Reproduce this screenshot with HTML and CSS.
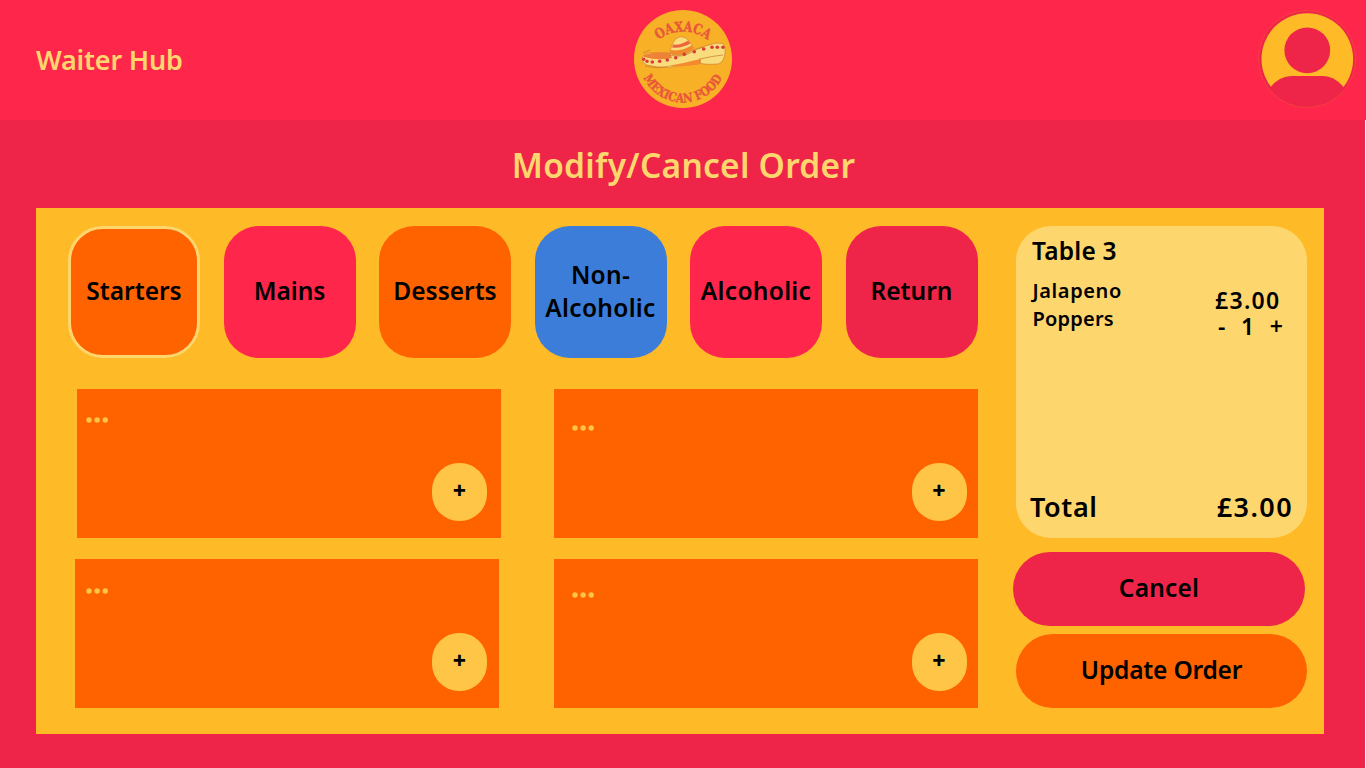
FILE: index.html
```html
<!DOCTYPE html>
<html lang="en">
<head>
<meta charset="utf-8">
<title>Waiter Hub</title>
<link rel="stylesheet" href="styles.css">
</head>
<body>
<header class="topbar">
  <div class="hub-name"><span>Waiter Hub</span></div>
  <svg class="logo" width="100" height="100" viewBox="0 0 100 100">
    <defs>
      <path id="arc-top" d="M15.4 42.5A40 40 0 0 1 84.6 42.5"/>
      <path id="arc-bottom" d="M6.5 50A43.5 43.5 0 0 0 93.5 50"/>
    </defs>
    <circle cx="50" cy="50" r="49" fill="#f8b026"/>
    <text class="logo-text logo-top"><textPath href="#arc-top" startOffset="50%" text-anchor="middle" textLength="53" lengthAdjust="spacingAndGlyphs">OAXACA</textPath></text>
    <text class="logo-text logo-bottom"><textPath href="#arc-bottom" startOffset="50%" text-anchor="middle" textLength="98" lengthAdjust="spacingAndGlyphs">MEXICAN FOOD</textPath></text>
    <path d="M9 50Q10 45 16 44L36 44Q46 50 60 41L76 36Q84 33 90 34.5Q93 38 92 44Q91 53 85 55Q73 56 66 54Q50 57 38 58Q24 59 14 56Q9 54 9 50Z" fill="#f9dc7b" stroke="#c8792b" stroke-width=".6"/>
    <path d="M11 46Q23 42 37 44L39 49Q25 52 11 48Z" fill="#ee8236"/>
    <path d="M35 57Q52 54 67 50Q69 54 66 55.5Q51 58 35 57Z" fill="#f58a30"/>
    <path d="M37 44C38 36 41 30 46 28C52 27 57 31 60.5 39Q49 49 37 44Z" fill="#f9dc7b" stroke="#c8792b" stroke-width=".6"/>
    <path d="M40 35.5Q48 36.5 55 31.5L57.5 34.5Q49 39.5 39 38.5Z" fill="#ee633b"/>
    <path d="M37.5 41Q49 43 59 36L60.5 39.5Q49 48 37 44.5Z" fill="#f28a2c"/>
    <path d="M36 46Q50 50 62 41L70 38M67 49V54M67 50Q79 47 90 46M10 44L17 41M12 57Q26 60 35 57.5" fill="none" stroke="#c8792b" stroke-width=".7"/>
    <g fill="#d93b3a"><circle cx="10.7" cy="50.3" r="1.7"/><circle cx="14" cy="52.3" r="1.7"/><circle cx="19.3" cy="53" r="1.8"/><circle cx="26.7" cy="52.3" r="1.8"/><circle cx="34.3" cy="51" r="1.8"/><circle cx="42.7" cy="48.7" r="1.8"/><circle cx="51.3" cy="45.3" r="1.8"/><circle cx="61.3" cy="42.7" r="1.8"/><circle cx="70.7" cy="40" r="1.8"/><circle cx="79" cy="38.3" r="1.8"/><circle cx="84.3" cy="38.3" r="1.8"/><circle cx="90" cy="38.3" r="1.8"/></g>
  </svg>
  <svg class="avatar" width="98" height="98" viewBox="0 0 98 98">
    <defs><clipPath id="disc"><circle cx="49" cy="49" r="48.5"/></clipPath></defs>
    <circle cx="49" cy="49" r="48.5" fill="#ee2548"/>
    <circle cx="49.3" cy="49" r="45.8" fill="#ffba28"/>
    <circle cx="49.3" cy="40.3" r="22.9" fill="#ee2548"/>
    <path clip-path="url(#disc)" d="M9 82Q19 66 34 66H64Q79 66 89 82V98H9Z" fill="#ee2548"/>
    <circle cx="49" cy="49" r="48.5" fill="none" stroke="#f65a38" stroke-width=".5"/>
  </svg>
</header>
<div class="page">
<h1 class="title"><span>Modify/Cancel Order</span></h1>
<main class="panel">
  <section class="menu">
    <nav class="categories">
      <button class="category orange selected"><span>Starters</span></button>
      <button class="category pink"><span>Mains</span></button>
      <button class="category orange"><span>Desserts</span></button>
      <button class="category blue"><span class="wide">Non-<br>Alcoholic</span></button>
      <button class="category pink"><span class="wide">Alcoholic</span></button>
      <button class="category red"><span>Return</span></button>
    </nav>
    <div class="dishes">
      <article class="dish"><svg class="dots" width="24" height="6"><circle cx="3" cy="3" r="2.7"/><circle cx="11.1" cy="3" r="2.7"/><circle cx="19.2" cy="3" r="2.7"/></svg><button class="add">+</button></article>
      <article class="dish right"><svg class="dots" width="24" height="6"><circle cx="3" cy="3" r="2.7"/><circle cx="11.1" cy="3" r="2.7"/><circle cx="19.2" cy="3" r="2.7"/></svg><button class="add">+</button></article>
      <article class="dish lower-left"><svg class="dots" width="24" height="6"><circle cx="3" cy="3" r="2.7"/><circle cx="11.1" cy="3" r="2.7"/><circle cx="19.2" cy="3" r="2.7"/></svg><button class="add">+</button></article>
      <article class="dish right lower-right"><svg class="dots" width="24" height="6"><circle cx="3" cy="3" r="2.7"/><circle cx="11.1" cy="3" r="2.7"/><circle cx="19.2" cy="3" r="2.7"/></svg><button class="add">+</button></article>
    </div>
  </section>
  <aside class="order">
    <div class="receipt">
      <h2 class="table-name">Table 3</h2>
      <div class="line-item">
        <div class="item-name">Jalapeno<br><span class="tight">Poppers</span></div>
        <div class="item-side">
          <div class="price">£3.00</div>
          <div class="quantity"><span>-</span><span>1</span><span>+</span></div>
        </div>
      </div>
      <div class="total"><span class="total-label">Total</span><span class="total-price">£3.00</span></div>
    </div>
    <button class="action cancel">Cancel</button>
    <button class="action update">Update Order</button>
  </aside>
</main>
</div>
</body>
</html>
```
FILE: styles.css
```css
* { box-sizing: border-box; }
body {
  margin: 0;
  width: 1366px;
  height: 768px;
  overflow: hidden;
  background: #fff;
  color: #000;
  font-family: "Noto Sans", "Open Sans", sans-serif;
  font-weight: 600;
}
button {
  border: 0;
  padding: 0;
  color: inherit;
  font: inherit;
}
.topbar {
  display: grid;
  grid-template-columns: 1fr 100px 1fr;
  height: 120px;
  padding: 9px 10px 0 34px;
  background: #ff264b;
}
.hub-name {
  padding: 32px 0 0 2px;
  font-size: 27px;
  line-height: 38px;
  letter-spacing: -.2px;
  color: #fed66e;
}
.logo { margin-left: -12px; }
.avatar { justify-self: end; margin: 1px 0 0; }
.logo-text {
  font-family: "DejaVu Serif", serif;
  font-weight: 700;
  fill: #e8573a;
  stroke: #e8573a;
  stroke-width: .4px;
}
.logo-top { font-size: 14px; }
.logo-bottom { font-size: 12.5px; }
.page {
  width: 1365px;
  height: 648px;
  background: #ee2548;
}
.title {
  margin: 0;
  height: 87.5px;
  padding: 22px 0 0 2px;
  text-align: center;
  font-size: 33.5px;
  font-weight: 600;
  line-height: 46px;
  letter-spacing: .25px;
  color: #fed66e;
}
.panel {
  display: flex;
  width: 1287.5px;
  height: 526.8px;
  margin-left: 36px;
  padding: 18px 16px 0 32px;
  background: #ffba28;
}
.menu { width: 945px; }
.categories { display: flex; gap: 23.5px; }
.category {
  width: 132px;
  height: 132px;
  padding-bottom: 2px;
  border-radius: 35px;
  font-size: 24.5px;
  line-height: 33px;
}
.wide { letter-spacing: .3px; }
.orange { background: #ff6300; }
.pink { background: #ff264b; }
.blue { background: #3b7dd8; }
.red { background: #ee2548; }
.selected { border: 3.5px solid #fed66e; }
.dishes {
  display: grid;
  grid-template-columns: 424px 424px;
  grid-template-rows: 149px 149px;
  gap: 21px 53px;
  padding: 31.5px 0 0 9px;
}
.dish {
  display: flex;
  justify-content: space-between;
  padding: 27.5px 14px 0 9px;
  background: #ff6300;
}
.dish.right { padding: 35.5px 11.5px 0 18px; }
.dish.lower-left { margin: 0 1.6px 0 -1.6px; padding: 28.5px 12.4px 0 10.6px; }
.dish.lower-right { padding-top: 32.5px; }
.dots { fill: #ffc547; }
.add {
  align-self: flex-end;
  width: 55px;
  height: 58px;
  margin-bottom: 17px;
  padding-bottom: 4px;
  border-radius: 27px;
  background: #ffc547;
  font-size: 23px;
  font-weight: 800;
}
.receipt {
  display: flex;
  flex-direction: column;
  width: 291px;
  height: 312.5px;
  margin-left: 3px;
  padding: 8.5px 15px 14.5px 14px;
  border-radius: 35px;
  background: #fed66e;
}
.table-name {
  margin: 0 0 0 2px;
  font-size: 24.5px;
  font-weight: 600;
  line-height: 34px;
  letter-spacing: .2px;
}
.line-item {
  display: flex;
  justify-content: space-between;
  padding: 8.5px 9px 0 2.5px;
}
.item-name { font-size: 20px; line-height: 28px; letter-spacing: .6px; }
.tight { letter-spacing: .2px; }
.item-side { width: 68px; padding-top: 10px; font-size: 23px; line-height: 26px; }
.price { letter-spacing: 1.3px; }
.quantity { display: flex; justify-content: space-between; padding-left: 3px; }
.total {
  display: flex;
  justify-content: space-between;
  margin-top: auto;
  font-size: 27px;
  line-height: 34px;
}
.total-label { letter-spacing: .6px; }
.total-price { letter-spacing: 1.4px; margin-right: -1px; }
.action {
  display: block;
  width: 292px;
  height: 74.5px;
  border-radius: 37px;
  font-size: 24.5px;
  padding-bottom: 2px;
}
.cancel { margin: 13.5px 0 7.5px; background: #ee2548; letter-spacing: .2px; }
.update { margin-left: 3px; width: 291px; background: #ff6300; letter-spacing: -.2px; }
```
